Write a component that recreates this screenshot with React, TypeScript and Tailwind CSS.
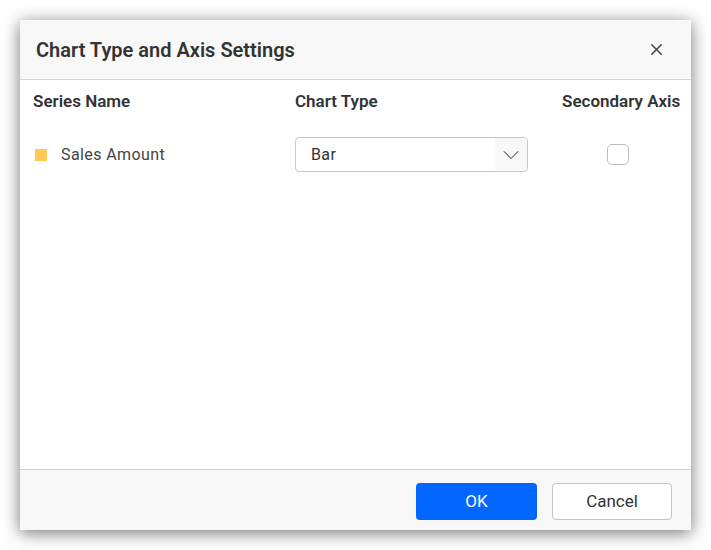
import { ChevronDown, X } from "lucide-react";

export default function App() {
    return (
        <div className="w-full min-h-screen bg-white p-5 font-['Roboto',sans-serif]">

            <div className="w-[671px] h-[510px] flex flex-col bg-white shadow-[0_3px_16px_rgba(0,0,0,0.55)]">

                {/* header */}
                <div className="h-[60px] flex items-center justify-between pl-4 pr-[25px] bg-[#f8f8f8] border-b border-[#d4d4d4]">
                    <h2 className="text-[20px] font-semibold text-[#333]">Chart Type and Axis Settings</h2>
                    <X size={19} strokeWidth={1.9} className="text-[#444]" />
                </div>

                {/* body */}
                <div className="flex-1 pl-[13px] pt-[11px]">
                    <div className="grid grid-cols-[262px_267px_1fr] text-[17px] leading-5 font-semibold text-[#333]">
                        <div>Series Name</div>
                        <div>Chart Type</div>
                        <div>Secondary Axis</div>
                    </div>

                    <div className="grid grid-cols-[262px_267px_1fr] items-center mt-[26px] text-[16px] tracking-[0.4px] text-[#444]">
                        <div className="flex items-center gap-[14px] pl-[2px]">
                            <span className="w-3 h-3 bg-[#ffc857]"></span>
                            <span>Sales Amount</span>
                        </div>
                        <div className="w-[233px] h-[35px] flex items-center justify-between border border-[#c8c8c8] rounded-[4px] overflow-hidden">
                            <span className="pl-[15px] text-[#333]">Bar</span>
                            <div className="w-[32px] h-full flex items-center justify-center bg-[#f8f8f8]">
                                <ChevronDown size={28} strokeWidth={0.9} className="text-[#555]" />
                            </div>
                        </div>
                        <div className="pl-[45px]">
                            <div className="w-[22px] h-[21px] border border-[#bdbdbd] rounded-[5px] bg-white"></div>
                        </div>
                    </div>
                </div>

                {/* footer */}
                <div className="h-[61px] flex items-center justify-end gap-[15px] pt-[3px] pr-[19px] bg-[#f8f8f8] border-t border-[#d0d0d0]">
                    <button className="w-[121px] h-[37px] rounded-[4px] bg-[#0367ff] text-white text-[17px]">OK</button>
                    <button className="w-[120px] h-[37px] rounded-[4px] bg-white border border-[#c4c4c4] text-[#333] text-[17px]">Cancel</button>
                </div>

            </div>

        </div>
    )
}
